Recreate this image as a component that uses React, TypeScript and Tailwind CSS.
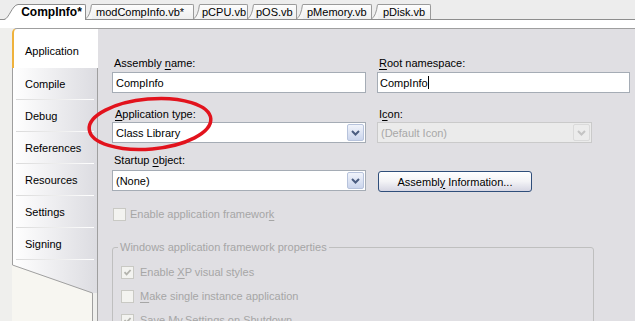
import React from "react";

function Check({ checked }: { checked?: boolean }) {
  return (
    <div className="w-[13px] h-[13px] shrink-0 border border-[#c9c9c4] bg-[#f3f3f0] flex items-center justify-center">
      {checked && (
        <svg width="9" height="9" viewBox="0 0 9 9" className="block">
          <path d="M1.5 4.2 L3.6 6.4 L7.6 2" fill="none" stroke="#b3b3ad" strokeWidth="1.8" />
        </svg>
      )}
    </div>
  );
}

function DropBtn({ disabled }: { disabled?: boolean }) {
  return (
    <div
      className={
        disabled
          ? "w-[17px] h-[17px] mr-[1px] rounded-[2px] border border-[#dadada] bg-[#ececec] flex items-center justify-center"
          : "w-[17px] h-[17px] mr-[1px] rounded-[2px] border border-[#b7c3dc] bg-gradient-to-b from-[#f1f4fb] to-[#cbd5ec] flex items-center justify-center"
      }
    >
      <svg width="9" height="6" viewBox="0 0 9 6" className="block">
        <path d="M1 1 L4.5 4.5 L8 1" fill="none" stroke={disabled ? "#c4c4c4" : "#4b5d80"} strokeWidth="2" />
      </svg>
    </div>
  );
}

function Diag() {
  return (
    <svg width="6" height="15" viewBox="0 0 6 15" className="block shrink-0">
      <path d="M0 15 Q4 12 6 0 L6 15 Z" fill="#f6f6f6" />
      <path d="M0 14.5 Q4 12 5.5 0.5" fill="none" stroke="#9a9a9a" />
    </svg>
  );
}

export default function App() {
  return (
    <div className="relative w-[635px] h-[321px] overflow-hidden bg-[#efefed] flex flex-col font-['Liberation_Sans',Arial,sans-serif] text-[11px] leading-[14px] text-black">
      {/* document tab strip */}
      <div className="h-[20px] shrink-0 flex items-end pl-[4px] border-b border-[#8d8d8d] bg-[#ededed]">
        <div className="flex items-end -mb-[1px] relative z-10">
          <svg width="14" height="16" viewBox="0 0 14 16" className="block">
            <path d="M0 16 C5 15 8 1 14 0.5 L14 16 Z" fill="#ffffff" />
            <path d="M0 15.5 C5 15 8 1 14 0.5" fill="none" stroke="#8d8d8d" />
          </svg>
          <div className="h-[16px] w-[68px] bg-white border-t border-r border-[#8d8d8d] rounded-tr-[2px] font-bold text-[12px] leading-[14px] text-center">
            CompInfo*
          </div>
        </div>
        <div className="flex items-end">
          <Diag />
          <div className="h-[15px] w-[102px] pl-[4px] border-t border-r border-[#9a9a9a] rounded-tr-[2px] bg-gradient-to-b from-[#fdfdfd] to-[#eeeeee] leading-[14px]">
            modCompInfo.vb*
          </div>
        </div>
        <div className="flex items-end">
          <Diag />
          <div className="h-[15px] w-[48px] pl-[2px] border-t border-r border-[#9a9a9a] rounded-tr-[2px] bg-gradient-to-b from-[#fdfdfd] to-[#eeeeee] leading-[14px]">
            pCPU.vb
          </div>
        </div>
        <div className="flex items-end">
          <Diag />
          <div className="h-[15px] w-[43px] pl-[2px] border-t border-r border-[#9a9a9a] rounded-tr-[2px] bg-gradient-to-b from-[#fdfdfd] to-[#eeeeee] leading-[14px]">
            pOS.vb
          </div>
        </div>
        <div className="flex items-end">
          <Diag />
          <div className="h-[15px] w-[69px] pl-[4px] border-t border-r border-[#9a9a9a] rounded-tr-[2px] bg-gradient-to-b from-[#fdfdfd] to-[#eeeeee] leading-[14px]">
            pMemory.vb
          </div>
        </div>
        <div className="flex items-end">
          <Diag />
          <div className="h-[15px] w-[53px] pl-[5px] border-t border-r border-[#9a9a9a] rounded-tr-[2px] bg-gradient-to-b from-[#fdfdfd] to-[#eeeeee] leading-[14px]">
            pDisk.vb
          </div>
        </div>
      </div>

      {/* white band */}
      <div className="h-[8px] shrink-0 bg-white" />

      {/* main */}
      <div className="flex-1 min-h-0 flex pl-[12px]">
        {/* side tabs */}
        <div className="w-[86px] shrink-0 flex flex-col">
          <div className="h-[40px] shrink-0 border-t border-l-2 border-t-[#9f9f9f] border-l-[#efb23c] rounded-tl-[5px] bg-white pt-[15px] pl-[11px]">
            Application
          </div>
          {["Compile", "Debug", "References", "Resources", "Settings", "Signing"].map((t) => (
            <div key={t} className="h-[32px] shrink-0 flex flex-col border-l border-r border-[#9f9f9f] bg-gradient-to-r from-white to-[#dcdce1]">
              <div className="flex-1 flex items-center pl-[12px]">{t}</div>
              <div className="h-[1px] mx-[3px] bg-gradient-to-r from-[#dadada] to-white" />
            </div>
          ))}
          <svg width="86" height="62" viewBox="0 0 86 62" className="block shrink-0">
            <defs>
              <linearGradient id="sg" x1="0" x2="1" y1="0" y2="0">
                <stop offset="0" stopColor="#ffffff" />
                <stop offset="1" stopColor="#dcdce1" />
              </linearGradient>
            </defs>
            <rect x="0" y="0" width="86" height="62" fill="#efefed" />
            <polygon points="0,0 86,0 86,33 80,33 0,5" fill="url(#sg)" />
            <polygon points="0,5 80,33 80,62 0,62" fill="#f7f6f1" />
            <path d="M0.5 0 V5 L80.5 33 V62" fill="none" stroke="#9f9f9f" />
            <path d="M85.5 0 V62" fill="none" stroke="#9f9f9f" />
          </svg>
        </div>

        {/* content */}
        <div className="flex-1 bg-[#e0dfe3] border-t border-[#9f9f9f] pt-[27px] pl-[14px] flex flex-col">
          <div className="flex gap-x-[11px]">
            <div className="w-[254px]">
              <div className="pl-[2px]">
                Assembly <span className="underline underline-offset-[2px]">n</span>ame:
              </div>
              <div className="mt-[2px] h-[21px] border border-[#a5acb5] bg-white pl-[3px] flex items-center">CompInfo</div>
            </div>
            <div className="w-[253px]">
              <div className="pl-[2px]">
                <span className="underline underline-offset-[2px]">R</span>oot namespace:
              </div>
              <div className="mt-[2px] h-[21px] border border-[#a5acb5] bg-white pl-[2px] flex items-center">
                CompInfo<span className="w-[1px] h-[13px] bg-black" />
              </div>
            </div>
          </div>

          <div className="flex gap-x-[11px] mt-[14px]">
            <div className="w-[254px]">
              <div className="pl-[3px]">
                <span className="underline underline-offset-[2px]">A</span>pplication type:
              </div>
              <div className="mt-[1px] h-[21px] border border-[#a5acb5] bg-white pl-[3px] flex items-center justify-between">
                <span>Class Library</span>
                <DropBtn />
              </div>
            </div>
            <div className="w-[253px]">
              <div className="pl-[2px]">
                I<span className="underline underline-offset-[2px]">c</span>on:
              </div>
              <div className="mt-[1px] w-[215px] h-[21px] border border-[#cacaca] bg-[#ebebeb] pl-[3px] flex items-center justify-between text-[#a8a8a8]">
                <span>(Default Icon)</span>
                <DropBtn disabled />
              </div>
            </div>
          </div>

          <div className="flex gap-x-[11px] mt-[10px]">
            <div className="w-[254px]">
              <div className="pl-[2px]">
                Startup <span className="underline underline-offset-[2px]">o</span>bject:
              </div>
              <div className="mt-[3px] h-[21px] border border-[#a5acb5] bg-white pl-[3px] flex items-center justify-between">
                <span>(None)</span>
                <DropBtn />
              </div>
            </div>
            <div className="w-[253px] pt-[18px]">
              <div className="ml-[1px] w-[154px] h-[21px] rounded-[3px] border border-[#2f4e7a] bg-gradient-to-b from-white via-[#f3f3f6] to-[#d6d6e3] flex items-center justify-center">
                Assembl<span className="underline underline-offset-[2px]">y</span>&nbsp;Information...
              </div>
            </div>
          </div>

          <div className="mt-[15px] flex items-center gap-[4px] pl-[1px] text-[#a6a6a6]">
            <Check />
            <span>
              Enable application framewor<span className="underline underline-offset-[2px]">k</span>
            </span>
          </div>

          <div className="mt-[26px] w-[482px] h-[200px] border border-[#bfbfbf] rounded-[3px] text-[#a6a6a6]">
            <div className="-mt-[8px] ml-[5px] px-[2px] w-fit bg-[#e0dfe3]">Windows application framework properties</div>
            <div className="mt-[11px] pl-[8px] flex flex-col gap-[10px]">
              <div className="flex items-center gap-[6px]">
                <Check checked />
                <span>
                  Enable <span className="underline underline-offset-[2px]">X</span>P visual styles
                </span>
              </div>
              <div className="flex items-center gap-[6px]">
                <Check />
                <span>
                  <span className="underline underline-offset-[2px]">M</span>ake single instance application
                </span>
              </div>
              <div className="flex items-center gap-[6px]">
                <Check checked />
                <span>Save My.Settings on Shutdown</span>
              </div>
            </div>
          </div>
        </div>
      </div>

      {/* red annotation ellipse */}
      <svg width="635" height="321" viewBox="0 0 635 321" className="absolute left-0 top-0 pointer-events-none">
        <ellipse cx="150" cy="124" rx="61" ry="25" transform="rotate(-5 150 124)" fill="none" stroke="#e2131d" strokeWidth="3.5" />
      </svg>
    </div>
  );
}
